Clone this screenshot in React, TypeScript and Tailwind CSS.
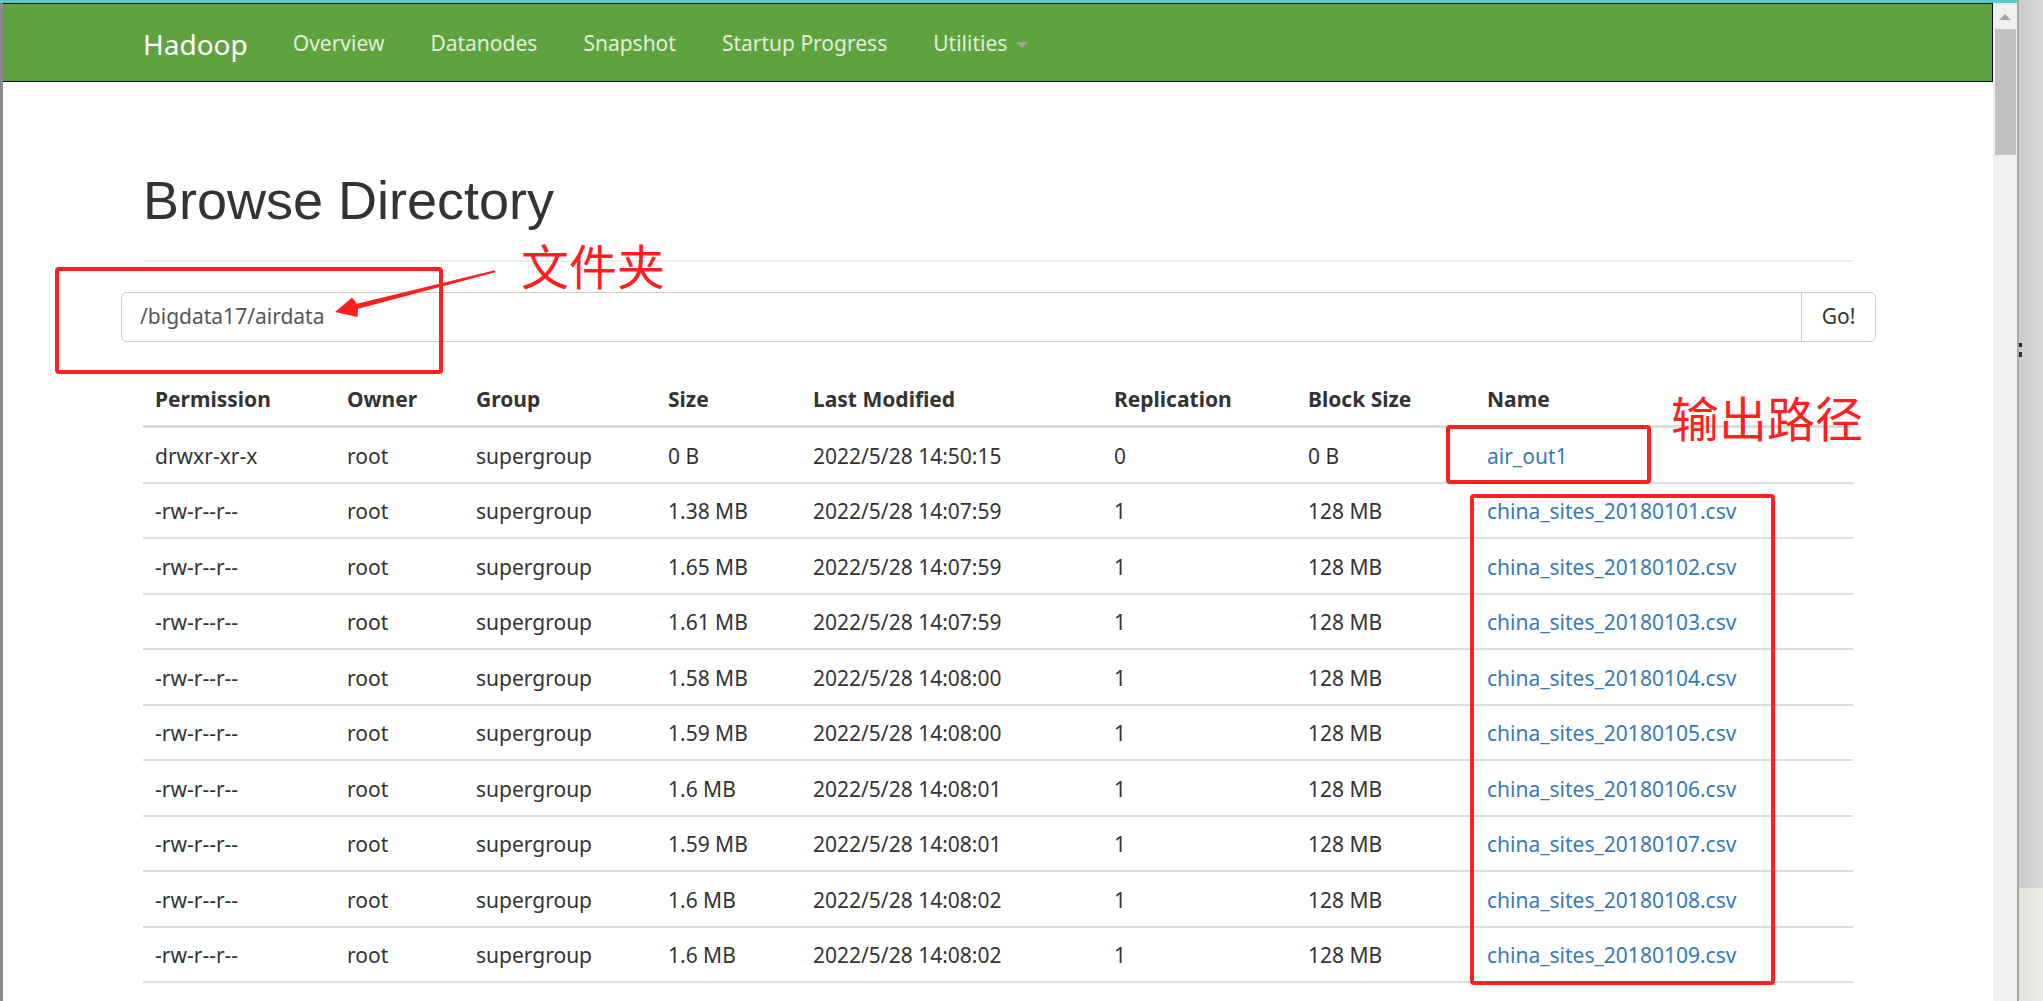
import React from "react";

const navLinks = ["Overview", "Datanodes", "Snapshot", "Startup Progress"];

const columns = [
  { label: "Permission", w: "w-[192px]" },
  { label: "Owner", w: "w-[129px]" },
  { label: "Group", w: "w-[192px]" },
  { label: "Size", w: "w-[145px]" },
  { label: "Last Modified", w: "w-[301px]" },
  { label: "Replication", w: "w-[194px]" },
  { label: "Block Size", w: "w-[179px]" },
  { label: "Name", w: "w-[378px]" },
];

type Row = {
  perm: string;
  size: string;
  time: string;
  repl: string;
  block: string;
  name: string;
};

const rows: Row[] = [
  { perm: "drwxr-xr-x", size: "0 B", time: "2022/5/28 14:50:15", repl: "0", block: "0 B", name: "air_out1" },
  { perm: "-rw-r--r--", size: "1.38 MB", time: "2022/5/28 14:07:59", repl: "1", block: "128 MB", name: "china_sites_20180101.csv" },
  { perm: "-rw-r--r--", size: "1.65 MB", time: "2022/5/28 14:07:59", repl: "1", block: "128 MB", name: "china_sites_20180102.csv" },
  { perm: "-rw-r--r--", size: "1.61 MB", time: "2022/5/28 14:07:59", repl: "1", block: "128 MB", name: "china_sites_20180103.csv" },
  { perm: "-rw-r--r--", size: "1.58 MB", time: "2022/5/28 14:08:00", repl: "1", block: "128 MB", name: "china_sites_20180104.csv" },
  { perm: "-rw-r--r--", size: "1.59 MB", time: "2022/5/28 14:08:00", repl: "1", block: "128 MB", name: "china_sites_20180105.csv" },
  { perm: "-rw-r--r--", size: "1.6 MB", time: "2022/5/28 14:08:01", repl: "1", block: "128 MB", name: "china_sites_20180106.csv" },
  { perm: "-rw-r--r--", size: "1.59 MB", time: "2022/5/28 14:08:01", repl: "1", block: "128 MB", name: "china_sites_20180107.csv" },
  { perm: "-rw-r--r--", size: "1.6 MB", time: "2022/5/28 14:08:02", repl: "1", block: "128 MB", name: "china_sites_20180108.csv" },
  { perm: "-rw-r--r--", size: "1.6 MB", time: "2022/5/28 14:08:02", repl: "1", block: "128 MB", name: "china_sites_20180109.csv" },
];

function Navbar() {
  return (
    <div className="flex h-[79px] items-center border-t border-b-[1.5px] border-r border-[#080808] bg-[#5fa33e] pl-[140px] pt-[2px] font-['Noto_Sans',sans-serif]">
      <span className="mr-[22px] text-[28px] leading-none text-white">Hadoop</span>
      {navLinks.map((l) => (
        <span key={l} className="px-[23px] text-[21px] leading-none text-[#e4eddf]">
          {l}
        </span>
      ))}
      <span className="flex items-center pl-[23px] text-[21px] leading-none text-[#e4eddf]">
        Utilities
        <span className="ml-[9px] mt-[3px] h-0 w-0 border-x-[6px] border-t-[6px] border-x-transparent border-t-[#a0a0a0]" />
      </span>
    </div>
  );
}

function FileTable() {
  return (
    <div className="ml-[140px] mt-[28px] w-[1710px] font-['Noto_Sans',sans-serif] text-[21px] text-[#333333]">
      <div className="flex h-[58px] items-center border-b-[3px] border-[#dddddd] pt-[4px] font-bold">
        {columns.map((c) => (
          <div key={c.label} className={`${c.w} pl-[12px]`}>
            {c.label}
          </div>
        ))}
      </div>
      {rows.map((r) => (
        <div key={r.name} className="flex h-[55.5px] items-center border-b-2 border-[#dddddd] pt-[3px]">
          <div className="w-[192px] pl-[12px]">{r.perm}</div>
          <div className="w-[129px] pl-[12px]">root</div>
          <div className="w-[192px] pl-[12px]">supergroup</div>
          <div className="w-[145px] pl-[12px]">{r.size}</div>
          <div className="w-[301px] pl-[12px]">{r.time}</div>
          <div className="w-[194px] pl-[12px]">{r.repl}</div>
          <div className="w-[179px] pl-[12px]">{r.block}</div>
          <div className="w-[378px] pl-[12px] text-[#337ab7]">{r.name}</div>
        </div>
      ))}
    </div>
  );
}

function Annotations() {
  return (
    <>
      <div className="absolute left-[55px] top-[267px] h-[107px] w-[388px] rounded-[4px] border-4 border-[#ff1f1f]" />
      <div className="absolute left-[1446px] top-[425px] h-[59px] w-[205px] rounded-[4px] border-4 border-[#ff1f1f]" />
      <div className="absolute left-[1470px] top-[494px] h-[491px] w-[305px] rounded-[4px] border-4 border-[#ff1f1f]" />
      <svg className="absolute left-0 top-0" width="2043" height="1001" viewBox="0 0 2043 1001">
        <polygon
          points="335,312 352,297.5 356.9,303.8 494.8,270.3 495.4,272.3 358.1,308.8 357.5,317 335,312"
          fill="#ff1f1f"
        />
      </svg>
      <div className="absolute left-[521px] top-[240px] font-['Noto_Sans_CJK_SC',sans-serif] text-[48px] leading-none text-[#ff1f1f]">
        文件夹
      </div>
      <div className="absolute left-[1671px] top-[392px] font-['Noto_Sans_CJK_SC',sans-serif] text-[48px] leading-none text-[#ff1f1f]">
        输出路径
      </div>
    </>
  );
}

export default function App() {
  return (
    <div className="relative flex h-[1001px] w-[2043px] overflow-hidden bg-white">
      <div className="flex w-[2017px] flex-col">
        <div className="h-[3px] bg-[#5cc9cc]" />
        <div className="flex flex-1 overflow-hidden">
          <div className="w-[1993px] border-l-[3px] border-[#8a8a8a]">
            <Navbar />
            <div className="ml-[140px] mt-[89px] w-[1710px] border-b-2 border-[#eeeeee] pb-[30px]">
              <h1 className="font-['Liberation_Sans',Arial,sans-serif] text-[54px] leading-[59px] font-normal text-[#333333]">
                Browse Directory
              </h1>
            </div>
            <div className="ml-[118px] mt-[30px] flex h-[50px] w-[1755px] rounded-[6px] border-[1.5px] border-[#cccccc] font-['Noto_Sans',sans-serif] text-[21px]">
              <div className="flex flex-1 items-center pl-[18px] text-[#555555]">/bigdata17/airdata</div>
              <div className="flex w-[74px] items-center justify-center border-l-[1.5px] border-[#cccccc] text-[#333333]">
                Go!
              </div>
            </div>
            <FileTable />
          </div>
          <div className="relative w-[24px] bg-[#f0f0f0]">
            <div className="mx-auto mt-[11px] h-0 w-0 border-x-[6px] border-b-[6px] border-x-transparent border-b-[#a3a3a3]" />
            <div className="ml-[2px] mt-[9px] h-[126px] w-[21px] bg-[#c1c1c1]" />
          </div>
        </div>
      </div>
      <div className="flex w-[26px] flex-col border-l-2 border-[#a8a8a8]">
        <div className="relative h-[888px] bg-gradient-to-r from-[#cbcbcb] to-[#d9d9d9]">
          <div className="absolute left-0 top-[343px] h-[4px] w-[3px] bg-[#2a2a2a]" />
          <div className="absolute left-0 top-[352px] h-[5px] w-[3px] bg-[#2a2a4a]" />
        </div>
        <div className="flex-1 bg-gradient-to-r from-[#e2e2de] to-[#ececea]" />
      </div>
      <Annotations />
    </div>
  );
}
